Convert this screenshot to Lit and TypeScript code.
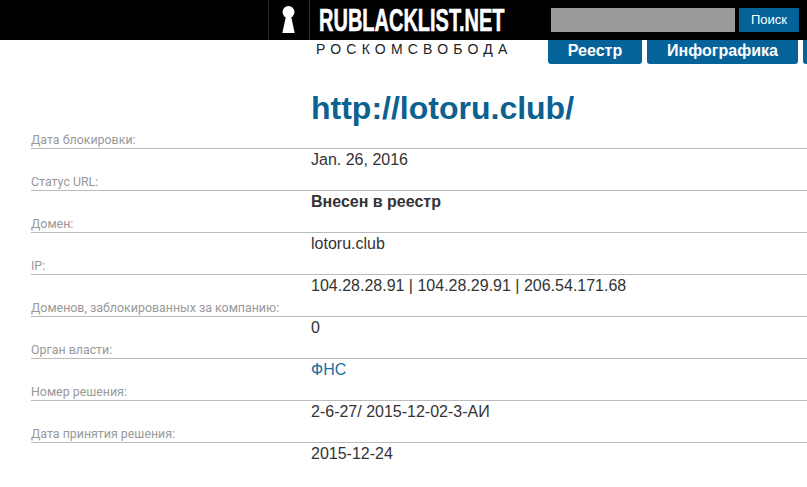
import { LitElement, html, css } from "lit";
import { customElement } from "lit/decorators.js";

const rows: [string, string, string?][] = [
  ["Дата блокировки:", "Jan. 26, 2016"],
  ["Статус URL:", "Внесен в реестр", "bold"],
  ["Домен:", "lotoru.club"],
  ["IP:", "104.28.28.91 | 104.28.29.91 | 206.54.171.68"],
  ["Доменов, заблокированных за компанию:", "0"],
  ["Орган власти:", "ФНС", "link"],
  ["Номер решения:", "2-6-27/ 2015-12-02-3-АИ"],
  ["Дата принятия решения:", "2015-12-24"],
];

@customElement("app-root")
export class AppRoot extends LitElement {
  static styles = css`
    :host { display: block; width: 807px; height: 487px; overflow: hidden; background: #fff; font-family: "Liberation Sans", Arial, sans-serif; color: #333; }
    .top { height: 40px; background: #000; display: flex; align-items: flex-start; }
    .key { margin-left: 268px; width: 40px; height: 40px; flex: none; border-left: 1px solid #2b2b2b; border-right: 1px solid #333; display: flex; justify-content: center; align-items: center; }
    .logo { width: 187px; flex: none; margin-left: 9px; margin-top: 6px; height: 30px; font-size: 31px; line-height: 30px; font-weight: 700; color: #fff; white-space: nowrap; transform-origin: 0 50%; transform: scaleX(0.645); -webkit-text-stroke: 0.6px #fff; }
    .search { margin-left: 45px; margin-top: 8px; width: 184px; height: 24px; background: #999; flex: none; }
    .go { margin-left: 4px; margin-top: 8px; width: 60px; height: 24px; flex: none; background: #06639a; color: #fff; font-size: 13px; line-height: 24px; text-align: center; }
    .sub { display: flex; height: 24px; }
    .brand { margin-left: 316px; width: 232px; flex: none; font-size: 14px; line-height: 18px; letter-spacing: 5.2px; color: #222; white-space: nowrap; }
    .tab { height: 24px; margin-right: 5px; background: #06639a; color: #fff; font-weight: 700; font-size: 16px; line-height: 21px; text-align: center; border-radius: 0 0 3px 3px; flex: none; }
    .t1 { width: 94px; } .t2 { width: 151px; } .t3 { width: 40px; }
    h1 { margin: 24px 0 0 311px; font-size: 32px; line-height: 40px; font-weight: 700; color: #0b6190; }
    .rows { margin: 0 0 0 31px; padding-top: 2px; }
    .label { font-family: Roboto, "Liberation Sans", sans-serif; font-size: 12.4px; line-height: 20px; color: #999; border-bottom: 1px solid #bbb; height: 18px; white-space: nowrap; }
    .value { margin-left: 280px; font-size: 16px; line-height: 21px; height: 23px; color: #333; white-space: nowrap; }
    .bold { font-weight: 700; }
    .link { color: #1a6f9f; }
  `;
  render() {
    return html`
      <div class="top">
        <div class="key">
          <svg width="16" height="30" viewBox="0 0 16 30"><circle cx="7.5" cy="7" r="6" fill="#fff"/><path d="M5 11h5l3.7 17H1.3z" fill="#fff"/></svg>
        </div>
        <div class="logo">RUBLACKLIST.NET</div>
        <div class="search"></div>
        <div class="go">Поиск</div>
      </div>
      <div class="sub">
        <div class="brand">РОСКОМСВОБОДА</div>
        <div class="tab t1">Реестр</div>
        <div class="tab t2">Инфографика</div>
        <div class="tab t3"></div>
      </div>
      <h1>http://lotoru.club/</h1>
      <div class="rows">
        ${rows.map(([l, v, c]) => html`<div class="label">${l}</div><div class="value ${c ?? ""}">${v}</div>`)}
      </div>
    `;
  }
}
